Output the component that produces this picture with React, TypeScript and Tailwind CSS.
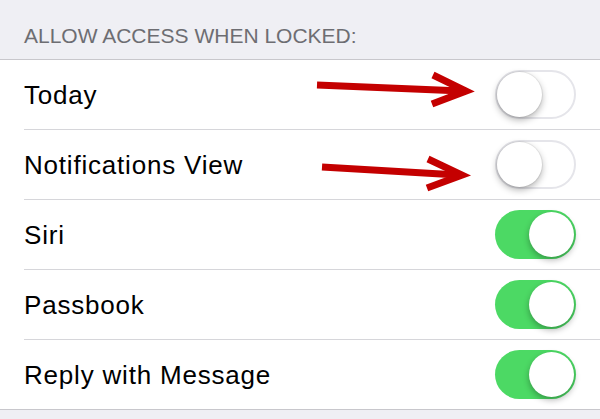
import React from "react";

const rows: { label: string; on: boolean }[] = [
  { label: "Today", on: false },
  { label: "Notifications View", on: false },
  { label: "Siri", on: true },
  { label: "Passbook", on: true },
  { label: "Reply with Message", on: true },
];

function Toggle({ on }: { on: boolean }) {
  if (on) {
    return (
      <div className="relative w-[81px] h-[49px] rounded-full bg-[#4cd964] shrink-0">
        <div className="absolute right-[2px] top-[2px] w-[45px] h-[45px] rounded-full bg-white shadow-[0_3px_6px_rgba(0,0,0,0.3)]" />
      </div>
    );
  }
  return (
    <div className="relative w-[81px] h-[49px] rounded-full bg-white border-2 border-[#e5e5ea] shrink-0">
      <div className="absolute left-0 top-0 w-[45px] h-[45px] rounded-full bg-white shadow-[0_3px_7px_rgba(0,0,0,0.3),0_0_0_1px_rgba(0,0,0,0.06)]" />
    </div>
  );
}

export default function App() {
  return (
    <div
      className="relative w-[600px] h-[419px] bg-[#efeff4] overflow-hidden"
      style={{ fontFamily: '"Liberation Sans", Arial, sans-serif' }}
    >
      <div className="h-[59px] flex items-end pl-[24px] pb-[13px] text-[21px] leading-none text-[#6d6d72]">
        ALLOW ACCESS WHEN LOCKED:
      </div>
      <div className="bg-white border-t border-b border-[#c8c7cc]">
        {rows.map((r, i) => (
          <div key={r.label} className="pl-[24px]">
            <div
              className={
                "flex items-center justify-between pr-[24px] " +
                (i < rows.length - 1 ? "border-b border-[#d6d6da] h-[70px]" : "h-[69px]")
              }
            >
              <span className="text-[26px] tracking-[0.8px] text-black leading-none">{r.label}</span>
              <Toggle on={r.on} />
            </div>
          </div>
        ))}
      </div>
      <svg className="absolute left-0 top-0" width="600" height="419" viewBox="0 0 600 419">
        <g fill="none" stroke="#c40000" strokeWidth="7" strokeLinejoin="miter" strokeLinecap="butt">
          <line x1="317" y1="85" x2="462" y2="91" />
          <polyline points="433,75 466,91 432,104" />
          <line x1="322" y1="167" x2="458" y2="175" />
          <polyline points="428,159 462,175 427,188" />
        </g>
      </svg>
    </div>
  );
}
